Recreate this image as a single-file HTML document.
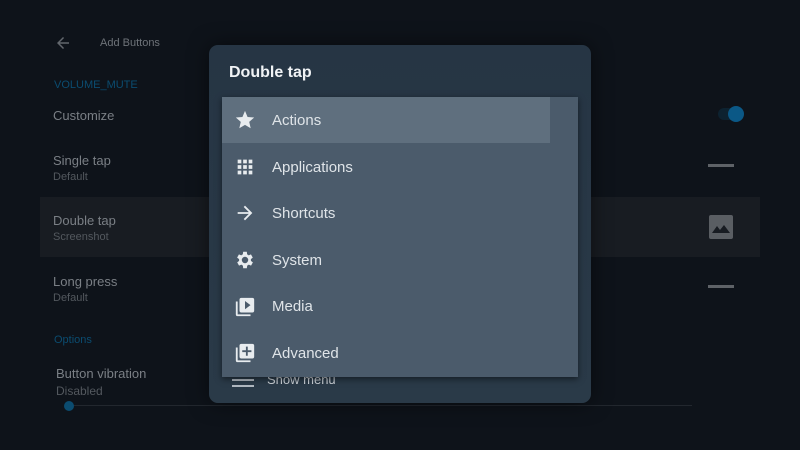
<!DOCTYPE html>
<html><head><style>
*{margin:0;padding:0;box-sizing:border-box}
body{width:800px;height:450px;background:#0e131a;font-family:"Liberation Sans",sans-serif;position:relative;overflow:hidden;color:#8a8f95}
.a{position:absolute;white-space:nowrap}
.t{font-size:13px;color:#7a7f85}
.s{font-size:11px;color:#53585e}
.blue{color:#0b4c70;font-size:11px}
.dlg{position:absolute;left:209px;top:45px;width:382px;height:358px;background:linear-gradient(#263544,#2a3a48);border-radius:9px;box-shadow:0 0 20px rgba(0,0,0,.5)}
.menu{position:absolute;left:222px;top:97px;width:356px;height:280px;background:#4b5b6b;box-shadow:0 2px 6px rgba(0,0,0,.5)}
.row{position:absolute;left:0;width:356px;height:46.6px;display:flex;align-items:center;font-size:15px;color:#dfe4e8}
.row svg{position:absolute;left:12px;width:22px;height:22px}
.row span{position:absolute;left:50px;top:15px}
</style></head><body>
<svg class="a" style="left:54px;top:34px" width="18" height="18" viewBox="0 0 24 24"><path d="M20 11H7.8l5.6-5.6L12 4l-8 8 8 8 1.4-1.4L7.8 13H20z" fill="#62676d"/></svg>
<div class="a" style="left:100px;top:37px;font-size:11px;color:#6e7379">Add Buttons</div>
<div class="a blue" style="left:54px;top:79px">VOLUME_MUTE</div>
<div class="a t" style="left:53px;top:108px">Customize</div>
<div class="a t" style="left:53px;top:153px">Single tap</div>
<div class="a s" style="left:53px;top:171px">Default</div>
<div class="a" style="left:40px;top:197px;width:720px;height:60px;background:#181c22"></div>
<div class="a t" style="left:53px;top:213px">Double tap</div>
<div class="a s" style="left:53px;top:231px">Screenshot</div>
<div class="a t" style="left:53px;top:274px">Long press</div>
<div class="a s" style="left:53px;top:292px">Default</div>
<div class="a blue" style="left:54px;top:334px">Options</div>
<div class="a t" style="left:56px;top:366px">Button vibration</div>
<div class="a" style="left:56px;top:384px;font-size:12px;color:#53585e">Disabled</div>
<div class="a" style="left:68px;top:405px;width:624px;height:1px;background:#22272e"></div>
<div class="a" style="left:64px;top:401px;width:10px;height:10px;border-radius:5px;background:#0b4c70"></div>
<div class="a" style="left:718px;top:108px;width:24px;height:12px;border-radius:6px;background:#0d2230"></div>
<div class="a" style="left:728px;top:106px;width:16px;height:16px;border-radius:8px;background:#0b5886"></div>
<div class="a" style="left:708px;top:164px;width:26px;height:3px;background:#5e6267"></div>
<div class="a" style="left:708px;top:285px;width:26px;height:3px;background:#5e6267"></div>
<div class="a" style="left:709px;top:215px;width:24px;height:24px;border-radius:2px;background:#5a5e63"></div>
<svg class="a" style="left:711px;top:224px" width="20" height="10" viewBox="0 0 20 10"><path d="M1 9 L6 2 L9 6 L13 1 L19 9Z" fill="#181c22"/></svg>
<div class="dlg"></div>
<div class="a" style="left:229px;top:64px;font-size:16px;font-weight:bold;color:#f0f3f5">Double tap</div>
<div class="a" style="left:232px;top:379px;width:22px;height:2px;background:#b0b8c0;box-shadow:0 6px 0 #b0b8c0,0 -6px 0 #b0b8c0"></div>
<div class="a" style="left:267px;top:372px;font-size:13px;color:#c8ced4">Show menu</div>
<div class="menu">
<div class="a" style="left:0;top:0;width:328px;height:46px;background:#5f6f7e"></div>
<div class="row" style="top:0"><svg viewBox="0 0 24 24"><path d="M12 17.3l6.2 3.7-1.6-7 5.4-4.7-7.2-.6L12 2 9.2 8.7 2 9.3l5.4 4.7-1.6 7z" fill="#e8ecef"/></svg><span>Actions</span></div>
<div class="row" style="top:46.6px"><svg viewBox="0 0 24 24"><path d="M4 8h4V4H4zm6 12h4v-4h-4zm-6 0h4v-4H4zm0-6h4v-4H4zm6 0h4v-4h-4zm6-10v4h4V4zm-6 4h4V4h-4zm6 6h4v-4h-4zm0 6h4v-4h-4z" fill="#e8ecef"/></svg><span>Applications</span></div>
<div class="row" style="top:93.2px"><svg viewBox="0 0 24 24"><path d="M12 4l-1.4 1.4 5.6 5.6H4v2h12.2l-5.6 5.6L12 20l8-8z" fill="#e8ecef"/></svg><span>Shortcuts</span></div>
<div class="row" style="top:139.8px"><svg viewBox="0 0 24 24"><path d="M19.4 13a7.5 7.5 0 000-2l2.1-1.6-2-3.5-2.5 1a7 7 0 00-1.7-1L15 3h-4l-.4 2.9a7 7 0 00-1.7 1l-2.5-1-2 3.5L6.6 11a7.5 7.5 0 000 2l-2.1 1.6 2 3.5 2.5-1a7 7 0 001.7 1L11 21h4l.4-2.9a7 7 0 001.7-1l2.5 1 2-3.5zM13 15.5a3.5 3.5 0 110-7 3.5 3.5 0 010 7z" fill="#e8ecef" transform="translate(-1 0)"/></svg><span>System</span></div>
<div class="row" style="top:186.4px"><svg viewBox="0 0 24 24"><path d="M4 6H2v14a2 2 0 002 2h14v-2H4zm16-4H8a2 2 0 00-2 2v12a2 2 0 002 2h12a2 2 0 002-2V4a2 2 0 00-2-2zm-8 12.5v-9l6 4.5z" fill="#e8ecef"/></svg><span>Media</span></div>
<div class="row" style="top:233px"><svg viewBox="0 0 24 24"><path d="M4 6H2v14a2 2 0 002 2h14v-2H4zm16-4H8a2 2 0 00-2 2v12a2 2 0 002 2h12a2 2 0 002-2V4a2 2 0 00-2-2zm-1 9h-4v4h-2v-4H9V9h4V5h2v4h4z" fill="#e8ecef"/></svg><span>Advanced</span></div>
</div>
</body></html>
